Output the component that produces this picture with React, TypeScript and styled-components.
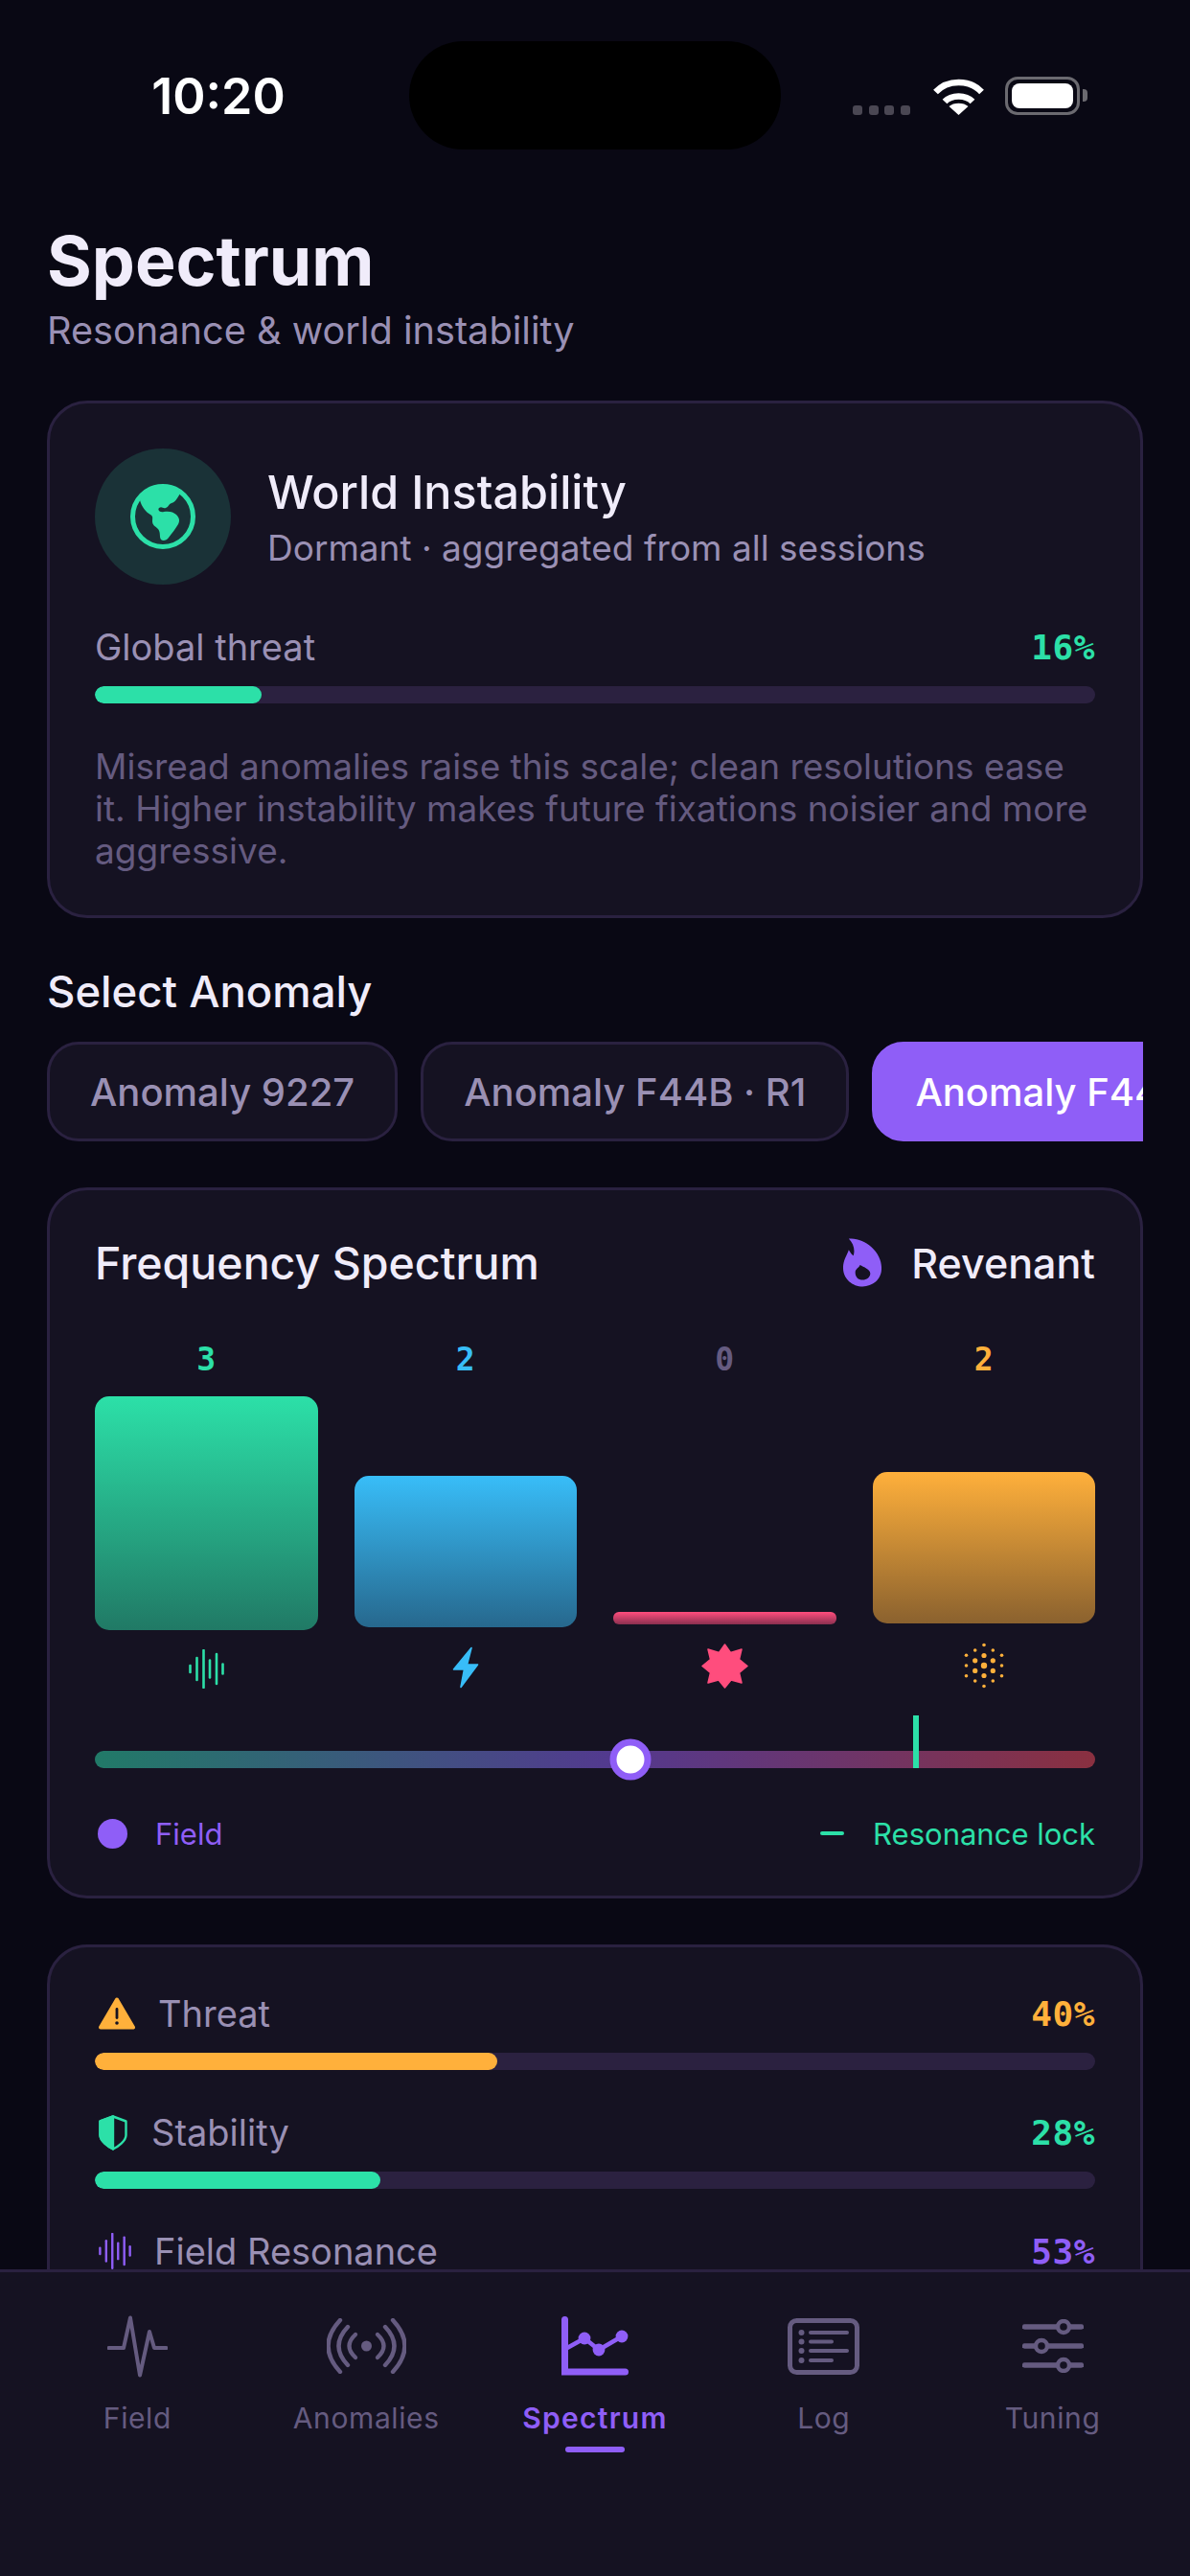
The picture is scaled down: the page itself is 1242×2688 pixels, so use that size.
import React from "react";
import styled, { createGlobalStyle } from "styled-components";

const GREEN = "#2ce0a8";
const BLUE = "#38bdf8";
const ORANGE = "#ffb03b";
const PINK = "#ff4d7d";
const PURPLE = "#8f5ef7";
const DIM = "#655b80";
const MUTED = "#9a90b4";
const TEXT = "#f0ecfa";
const LINE = "#2a2140";
const PANEL = "#151222";

const GlobalStyle = createGlobalStyle`
  html, body {
    margin: 0;
    padding: 0;
    background: #090814;
  }
  * {
    box-sizing: border-box;
  }
`;

const Screen = styled.div`
  position: relative;
  width: 1242px;
  height: 2688px;
  overflow: hidden;
  background: #090814;
  font-family: Inter, "Liberation Sans", sans-serif;
  color: ${TEXT};
`;

const StatusBar = styled.div`
  display: grid;
  grid-template-columns: 427px 388px 1fr;
  height: 229px;
  padding-top: 43px;
  align-items: start;
`;

const Clock = styled.div`
  font-size: 52px;
  font-weight: 600;
  line-height: 60px;
  color: #fff;
  text-align: center;
  padding: 28px 0 0 29px;
`;

const Island = styled.div`
  height: 113px;
  border-radius: 57px;
  background: #000;
`;

const StatusIcons = styled.div`
  display: flex;
  align-items: flex-end;
  height: 77px;
  padding-left: 75px;
`;

const SignalDots = styled.div`
  display: flex;
  gap: 6.5px;
  margin-right: 24px;
`;

const SignalDot = styled.span`
  width: 10px;
  height: 10px;
  border-radius: 3px;
  background: #4a4753;
`;

const Battery = styled.div`
  position: relative;
  width: 78px;
  height: 40px;
  margin-left: 22px;
  padding: 4px;
  border: 3px solid #6b6a70;
  border-radius: 13px;
  &::after {
    content: "";
    position: absolute;
    right: -11px;
    top: 10px;
    width: 5px;
    height: 13px;
    border-radius: 0 4px 4px 0;
    background: #6b6a70;
  }
`;

const BatteryFill = styled.div`
  height: 100%;
  border-radius: 8px;
  background: #fff;
`;

const Content = styled.div`
  padding: 0 49px;
  display: flex;
  flex-direction: column;
`;

const Title = styled.h1`
  margin: 0;
  font-size: 71.5px;
  line-height: 86px;
  font-weight: 700;
`;

const Subtitle = styled.p`
  margin: 8px 0 51px;
  font-size: 39.7px;
  line-height: 44px;
  color: ${MUTED};
`;

const Card = styled.section<{ $mt?: number }>`
  margin-top: ${(p) => p.$mt ?? 0}px;
  padding: 47px 47px 45px;
  border: 3px solid ${LINE};
  border-radius: 42px;
  background: ${PANEL};
`;

const WorldHeader = styled.div`
  display: flex;
  align-items: center;
  gap: 38px;
`;

const GlobeBadge = styled.div`
  flex: none;
  display: flex;
  align-items: center;
  justify-content: center;
  width: 142px;
  height: 142px;
  border-radius: 50%;
  background: #1a3237;
`;

const WorldTitle = styled.div`
  font-size: 48.5px;
  line-height: 58px;
  font-weight: 500;
`;

const WorldSub = styled.div`
  margin-top: 7px;
  font-size: 37px;
  line-height: 44px;
  color: ${MUTED};
`;

const MeterRow = styled.div<{ $mt: number }>`
  display: flex;
  align-items: center;
  justify-content: space-between;
  height: 44px;
  margin-top: ${(p) => p.$mt}px;
`;

const MeterLabel = styled.div`
  display: flex;
  align-items: center;
  font-size: 38px;
  color: ${MUTED};
  white-space: nowrap;
`;

const MeterIcon = styled.span<{ $gap: number }>`
  display: flex;
  flex: none;
  margin: 0 ${(p) => p.$gap}px 0 4px;
`;

const Percent = styled.div<{ $color: string }>`
  font-family: "DejaVu Sans Mono", "Liberation Mono", monospace;
  font-size: 36px;
  font-weight: 700;
  letter-spacing: 0.6px;
  color: ${(p) => p.$color};
`;

const Track = styled.div`
  height: 18px;
  margin-top: 19px;
  border-radius: 9px;
  background: #2b2140;
  overflow: hidden;
`;

const Fill = styled.div<{ $color: string; $pct: number }>`
  width: ${(p) => p.$pct}%;
  height: 100%;
  border-radius: 9px;
  background: ${(p) => p.$color};
`;

const Note = styled.p`
  margin: 44px 0 0;
  font-size: 37px;
  line-height: 44px;
  color: ${DIM};
`;

const SectionLabel = styled.h2`
  margin: 50px 0 0;
  font-size: 45.5px;
  line-height: 54px;
  font-weight: 500;
`;

const ChipRow = styled.div`
  display: flex;
  gap: 24px;
  margin-top: 25px;
  overflow: hidden;
`;

const Chip = styled.div<{ $active?: boolean }>`
  flex: none;
  height: 104px;
  padding: 0 42px;
  display: flex;
  align-items: center;
  font-size: 40px;
  font-weight: 500;
  white-space: nowrap;
  border-radius: 33px;
  border: 3px solid ${(p) => (p.$active ? PURPLE : LINE)};
  background: ${(p) => (p.$active ? PURPLE : PANEL)};
  color: ${(p) => (p.$active ? "#fff" : MUTED)};
`;

const SpectrumHeader = styled.div`
  display: flex;
  align-items: center;
  justify-content: space-between;
  height: 58px;
`;

const SpectrumTitle = styled.div`
  font-size: 46.5px;
  font-weight: 500;
`;

const TypeTag = styled.div`
  display: flex;
  align-items: center;
  gap: 30px;
  font-size: 43px;
  font-weight: 500;
`;

const Bars = styled.div`
  display: grid;
  grid-template-columns: repeat(4, 1fr);
  column-gap: 38px;
  height: 366px;
  margin-top: 49px;
`;

const BarColumn = styled.div`
  display: flex;
  flex-direction: column;
  align-items: center;
`;

const BarCount = styled.div<{ $color: string }>`
  font-family: "DejaVu Sans Mono", "Liberation Mono", monospace;
  padding-top: 3px;
  font-size: 33px;
  line-height: 40px;
  font-weight: 700;
  color: ${(p) => p.$color};
`;

const Bar = styled.div<{ $color: string; $height: number }>`
  width: 100%;
  height: ${(p) => p.$height}px;
  margin-top: auto;
  border-radius: ${(p) => (p.$height < 30 ? 6 : 15)}px;
  background: linear-gradient(180deg, ${(p) => p.$color}, ${(p) => p.$color}80);
`;

const BarIcon = styled.div`
  display: flex;
  margin-top: 20px;
`;

const Slider = styled.div`
  position: relative;
  height: 18px;
  margin-top: 65px;
  border-radius: 9px;
  background: linear-gradient(90deg, #217a68 0%, #53398f 52%, #8a3040 100%);
`;

const Thumb = styled.div<{ $pct: number }>`
  position: absolute;
  left: ${(p) => p.$pct}%;
  top: 9px;
  width: 43px;
  height: 43px;
  transform: translate(-50%, -50%);
  border: 7px solid ${PURPLE};
  border-radius: 50%;
  background: #fff;
`;

const LockMarker = styled.div<{ $pct: number }>`
  position: absolute;
  left: ${(p) => p.$pct}%;
  bottom: 0;
  width: 6px;
  height: 55px;
  background: ${GREEN};
`;

const Legend = styled.div`
  display: flex;
  align-items: center;
  justify-content: space-between;
  height: 40px;
  margin-top: 48px;
  font-size: 31px;
`;

const LegendItem = styled.div<{ $color: string }>`
  display: flex;
  align-items: center;
  color: ${(p) => p.$color};
`;

const LegendDot = styled.span`
  width: 31px;
  height: 31px;
  margin: 0 29px 0 3px;
  border-radius: 50%;
  background: ${PURPLE};
`;

const LegendDash = styled.span`
  width: 25px;
  height: 4px;
  margin-right: 30px;
  border-radius: 2px;
  background: ${GREEN};
`;

const Nav = styled.nav`
  position: absolute;
  left: 0;
  right: 0;
  bottom: 0;
  height: 320px;
  display: grid;
  grid-template-columns: repeat(5, 1fr);
  padding: 43px 24px 0;
  border-top: 3px solid ${LINE};
  background: ${PANEL};
`;

const NavItem = styled.div<{ $active?: boolean }>`
  display: flex;
  flex-direction: column;
  align-items: center;
  color: ${(p) => (p.$active ? PURPLE : DIM)};
`;

const NavIcon = styled.div`
  display: flex;
  align-items: center;
  justify-content: center;
  height: 68px;
`;

const NavLabel = styled.div<{ $active?: boolean }>`
  margin-top: 23px;
  font-size: 30px;
  line-height: 36px;
  letter-spacing: ${(p) => (p.$active ? 1.3 : 0.6)}px;
  font-weight: ${(p) => (p.$active ? 600 : 400)};
`;

const NavMark = styled.div`
  width: 62px;
  height: 6px;
  margin-top: 12px;
  border-radius: 3px;
  background: ${PURPLE};
`;

const Wave: React.FC<{ color: string; scale?: number }> = ({ color, scale = 1 }) => {
  const bars = [
    [1.5, 9],
    [8.5, 25],
    [15.5, 41],
    [22, 20],
    [29, 33],
    [35.5, 12],
  ];
  return (
    <svg width={37 * scale} height={41 * scale} viewBox="0 0 37 41">
      {bars.map(([x, h]) => (
        <line
          key={x}
          x1={x}
          x2={x}
          y1={20.5 - h / 2 + 1}
          y2={20.5 + h / 2 - 1}
          stroke={color}
          strokeWidth="2.6"
          strokeLinecap="round"
        />
      ))}
    </svg>
  );
};

const Bolt = () => (
  <svg width="28" height="44" viewBox="0 0 28 44">
    <path
      d="M20 1.5 L1.5 24 L12.5 24 L9 42.5 L26.5 19 L15.5 19 Z"
      fill={BLUE}
      stroke={BLUE}
      strokeWidth="1.6"
      strokeLinejoin="round"
    />
  </svg>
);

const Burst = () => (
  <svg width="49" height="47" viewBox="0 0 49 47">
    <polygon
      points="24.5,1 30.5,9.5 42,6 39.5,16.5 48,23.5 39.5,30.5 42,41 31,38 24.5,46 18,38 7,41 9.5,30.5 1,23.5 9.5,16.5 7,6 18.5,9.5"
      fill={PINK}
      stroke={PINK}
      strokeWidth="1.5"
      strokeLinejoin="round"
    />
  </svg>
);

const Particles = () => {
  const dots = [
    [0, 0, 3.2],
    [0, -10.5, 2.6],
    [9.3, -5.2, 2.6],
    [9.3, 5.4, 2.6],
    [0, 10.5, 2.6],
    [-9.3, 5.4, 2.6],
    [-9.3, -5.2, 2.6],
    [0, -21.5, 1.8],
    [9.3, -16, 1.8],
    [18.5, -10.7, 1.8],
    [18.5, 0, 1.8],
    [18.5, 10.7, 1.8],
    [9.3, 16, 1.8],
    [0, 21.5, 1.8],
    [-9.3, 16, 1.8],
    [-18.5, 10.7, 1.8],
    [-18.5, 0, 1.8],
    [-18.5, -10.7, 1.8],
    [-9.3, -16, 1.8],
  ];
  return (
    <svg width="42" height="48" viewBox="-21 -24 42 48">
      {dots.map(([x, y, r], i) => (
        <circle key={i} cx={x} cy={y} r={r} fill={ORANGE} />
      ))}
    </svg>
  );
};

const Globe = () => (
  <svg width="68" height="68" viewBox="0 0 68 68">
    <circle cx="34" cy="34" r="31.5" fill="none" stroke={GREEN} strokeWidth="5" />
    <path
      d="M10 17 C16 6 25 2 34 2 C41 2 47 5 52 10 C49 15 47 19 43 20 C40 21 40 24 37 25 C34 26 33 23 30 25 C28 27 31 30 35 29 C40 28 45 29 48 32 C51 35 52 38 50 42 C47 47 43 52 40 56 C38 59 34 60 32 58 C30 55 32 51 29 47 C26 44 23 43 23 39 C23 35 24 34 21 32 C16 29 12 24 10 17 Z"
      fill={GREEN}
    />
  </svg>
);

const Flame = () => (
  <svg width="42" height="52" viewBox="17 14 43 52">
    <path
      fillRule="evenodd"
      d="M24 14 C40 12 60 28 59 46 C59 58 49 65 39 65 C28 65 18 57 18 45 C18 37 22 32 24 26 C26 29 27 31 29 32 C31 26 29 19 24 14 Z M39 58 C34 58 31 55 31 50 C31 46 35 45 36 42 C40 44 47 47 47 51 C47 55 43 58 39 58 Z"
      fill={PURPLE}
    />
  </svg>
);

const Warning = () => (
  <svg width="38" height="34" viewBox="0 0 38 34">
    <path
      d="M19 2.5 L36 31.5 L2 31.5 Z"
      fill={ORANGE}
      stroke={ORANGE}
      strokeWidth="4"
      strokeLinejoin="round"
    />
    <rect x="17.6" y="11" width="2.8" height="12" rx="1.4" fill={PANEL} />
    <circle cx="19" cy="27" r="1.8" fill={PANEL} />
  </svg>
);

const Shield = () => (
  <svg width="30" height="37" viewBox="0 0 30 37">
    <path
      d="M15 1.5 L28.5 6.5 L28.5 21 C28.5 27 20 33 15 35.5 C10 33 1.5 27 1.5 21 L1.5 6.5 Z"
      fill="none"
      stroke={GREEN}
      strokeWidth="2.4"
      strokeLinejoin="round"
    />
    <path
      d="M15 1.5 L1.5 6.5 L1.5 21 C1.5 27 10 33 15 35.5 Z"
      fill={GREEN}
      stroke={GREEN}
      strokeWidth="2.4"
      strokeLinejoin="round"
    />
  </svg>
);

const FieldIcon = () => (
  <svg width="63" height="65" viewBox="0 0 63 65" fill="none">
    <path
      d="M1.5 34 L17 34 L24 2.5 L34 62.5 L44 17 L49 34 L61.5 34"
      stroke="currentColor"
      strokeWidth="4"
      strokeLinecap="round"
      strokeLinejoin="round"
    />
  </svg>
);

const AnomaliesIcon = () => (
  <svg width="83" height="58" viewBox="0 0 83 58" fill="none" stroke="currentColor" strokeWidth="4.4" strokeLinecap="round">
    <circle cx="41.5" cy="29" r="5.5" fill="currentColor" stroke="none" />
    <path d="M30 17 Q17 29 30 41 M53 17 Q66 29 53 41" />
    <path d="M22 9 Q3 29 22 49 M61 9 Q80 29 61 49" />
    <path d="M14 2 Q-11 29 14 56 M69 2 Q94 29 69 56" />
  </svg>
);

const ChartIcon = () => (
  <svg width="70" height="62" viewBox="0 0 70 62" fill="none">
    <path d="M3.5 3.5 L3.5 58 L66.5 58" stroke="currentColor" strokeWidth="7" strokeLinecap="round" strokeLinejoin="miter" />
    <path d="M6 33 L24 23 L39 35 L63 21" stroke="currentColor" strokeWidth="4.6" />
    <circle cx="24" cy="23" r="6.4" fill="currentColor" />
    <circle cx="39" cy="35" r="6.4" fill="currentColor" />
    <circle cx="63" cy="21" r="6.4" fill="currentColor" />
  </svg>
);

const LogIcon = () => (
  <svg width="75" height="59" viewBox="0 0 75 59" fill="none" stroke="currentColor">
    <rect x="2.5" y="2.5" width="70" height="54" rx="7" strokeWidth="5" />
    {[
      [15, 62],
      [24.5, 46],
      [34, 62],
      [44, 46],
    ].map(([y, end]) => (
      <g key={y}>
        <circle cx="14.5" cy={y} r="3" fill="currentColor" stroke="none" />
        <line x1="24" x2={end} y1={y} y2={y} strokeWidth="4" strokeLinecap="round" />
      </g>
    ))}
  </svg>
);

const TuningIcon = () => (
  <svg width="64" height="56" viewBox="0 0 64 56" fill="none" stroke="currentColor" strokeWidth="5.4" strokeLinecap="round">
    {[
      [8, 43],
      [28, 20],
      [48, 43],
    ].map(([y, x]) => (
      <g key={y}>
        <line x1="2.5" x2="61.5" y1={y} y2={y} />
        <circle cx={x} cy={y} r="6" fill={PANEL} strokeWidth="4.4" />
      </g>
    ))}
  </svg>
);

const WifiIcon = () => (
  <svg width="53" height="38" viewBox="0 0 53 38" fill="none" stroke="#fff" strokeWidth="6.5">
    <path d="M2.5 14 C15 0.5 38 0.5 50.5 14" />
    <path d="M12 24 C19 16.5 34 16.5 41 24" />
    <path d="M26.5 38 L16.5 29 C21 24.5 32 24.5 36.5 29 Z" fill="#fff" stroke="none" />
  </svg>
);

const navItems = [
  { label: "Field", icon: <FieldIcon /> },
  { label: "Anomalies", icon: <AnomaliesIcon /> },
  { label: "Spectrum", icon: <ChartIcon />, active: true },
  { label: "Log", icon: <LogIcon /> },
  { label: "Tuning", icon: <TuningIcon /> },
];

const spectrum = [
  { count: 3, color: GREEN, height: 244, icon: <Wave color={GREEN} /> },
  { count: 2, color: BLUE, height: 158, icon: <Bolt /> },
  { count: 0, color: PINK, height: 13, icon: <Burst />, countColor: DIM },
  { count: 2, color: ORANGE, height: 158, icon: <Particles /> },
];

const App: React.FC = () => {
  return (
    <Screen>
      <GlobalStyle />
      <StatusBar>
        <Clock>10:20</Clock>
        <Island />
        <StatusIcons>
          <SignalDots>
            <SignalDot />
            <SignalDot />
            <SignalDot />
            <SignalDot />
          </SignalDots>
          <WifiIcon />
          <Battery>
            <BatteryFill />
          </Battery>
        </StatusIcons>
      </StatusBar>
      <Content>
        <Title>Spectrum</Title>
        <Subtitle>Resonance &amp; world instability</Subtitle>

        <Card>
          <WorldHeader>
            <GlobeBadge>
              <Globe />
            </GlobeBadge>
            <div>
              <WorldTitle>World Instability</WorldTitle>
              <WorldSub>Dormant · aggregated from all sessions</WorldSub>
            </div>
          </WorldHeader>
          <MeterRow $mt={43}>
            <MeterLabel>Global threat</MeterLabel>
            <Percent $color={GREEN}>16%</Percent>
          </MeterRow>
          <Track>
            <Fill $color={GREEN} $pct={16.7} />
          </Track>
          <Note>
            Misread anomalies raise this scale; clean resolutions ease it. Higher
            instability makes future fixations noisier and more aggressive.
          </Note>
        </Card>

        <SectionLabel>Select Anomaly</SectionLabel>
        <ChipRow>
          <Chip>Anomaly 9227</Chip>
          <Chip>Anomaly F44B · R1</Chip>
          <Chip $active>Anomaly F44B · R2</Chip>
        </ChipRow>

        <Card $mt={48}>
          <SpectrumHeader>
            <SpectrumTitle>Frequency Spectrum</SpectrumTitle>
            <TypeTag>
              <Flame />
              Revenant
            </TypeTag>
          </SpectrumHeader>
          <Bars>
            {spectrum.map((s, i) => (
              <BarColumn key={i}>
                <BarCount $color={s.countColor ?? s.color}>{s.count}</BarCount>
                <Bar $color={s.color} $height={s.height} />
                <BarIcon>{s.icon}</BarIcon>
              </BarColumn>
            ))}
          </Bars>
          <Slider>
            <LockMarker $pct={81.8} />
            <Thumb $pct={53.5} />
          </Slider>
          <Legend>
            <LegendItem $color={PURPLE}>
              <LegendDot />
              Field
            </LegendItem>
            <LegendItem $color={GREEN}>
              <LegendDash />
              Resonance lock
            </LegendItem>
          </Legend>
        </Card>

        <Card $mt={48}>
          <MeterRow $mt={0}>
            <MeterLabel>
              <MeterIcon $gap={24}>
                <Warning />
              </MeterIcon>
              Threat
            </MeterLabel>
            <Percent $color={ORANGE}>40%</Percent>
          </MeterRow>
          <Track>
            <Fill $color={ORANGE} $pct={40.2} />
          </Track>
          <MeterRow $mt={43}>
            <MeterLabel>
              <MeterIcon $gap={25}>
                <Shield />
              </MeterIcon>
              Stability
            </MeterLabel>
            <Percent $color={GREEN}>28%</Percent>
          </MeterRow>
          <Track>
            <Fill $color={GREEN} $pct={28.5} />
          </Track>
          <MeterRow $mt={43}>
            <MeterLabel>
              <MeterIcon $gap={24}>
                <Wave color={PURPLE} scale={0.92} />
              </MeterIcon>
              Field Resonance
            </MeterLabel>
            <Percent $color={PURPLE}>53%</Percent>
          </MeterRow>
          <Track>
            <Fill $color={PURPLE} $pct={53} />
          </Track>
        </Card>
      </Content>

      <Nav>
        {navItems.map((item) => (
          <NavItem key={item.label} $active={item.active}>
            <NavIcon>{item.icon}</NavIcon>
            <NavLabel $active={item.active}>{item.label}</NavLabel>
            {item.active && <NavMark />}
          </NavItem>
        ))}
      </Nav>
    </Screen>
  );
};

export default App;
